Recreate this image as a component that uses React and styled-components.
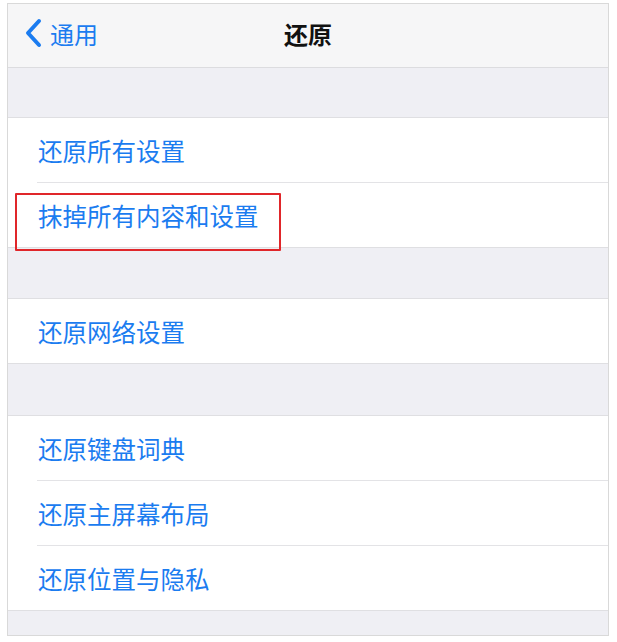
import React from 'react';
import styled, { createGlobalStyle } from 'styled-components';

const GlobalStyle = createGlobalStyle`
  body {
    margin: 0;
    background: #ffffff;
    font-family: "Noto Sans CJK SC", "Noto Sans", sans-serif;
  }
`;

const Frame = styled.div`
  margin: 3px 0 0 7px;
  width: 602px;
  height: 633px;
  box-sizing: border-box;
  border: 1px solid #d9d9d9;
  background: #efeff4;
  display: flex;
  flex-direction: column;
  overflow: hidden;
`;

const NavBar = styled.div`
  height: 64px;
  flex-shrink: 0;
  background: #f6f6f7;
  border-bottom: 1px solid #dcdcdf;
  position: relative;
  display: flex;
  align-items: center;
  justify-content: center;
  padding-bottom: 5px;
  box-sizing: border-box;
`;

const Back = styled.div`
  position: absolute;
  left: 16px;
  top: 0;
  bottom: 5px;
  display: flex;
  align-items: center;
  gap: 6px;
  color: #1b7cf0;
  font-size: 24px;
`;

const Title = styled.div`
  font-size: 24px;
  font-weight: 600;
  color: #111111;
`;

const Gap = styled.div`
  height: ${p => p.h}px;
  flex-shrink: 0;
`;

const Group = styled.div`
  background: #ffffff;
  border-top: 1px solid #dfdfe2;
  border-bottom: 1px solid #dfdfe2;
  flex-shrink: 0;
`;

const Row = styled.div`
  position: relative;
  display: flex;
  align-items: center;
  padding-top: 1px;
  box-sizing: border-box;
  font-size: 24.5px;
  color: #1b7cf0;
  border-top: ${p => (p.first ? 'none' : '1px solid #e3e3e6')};
  height: ${p => (p.first ? 64 : 65)}px;
  margin-left: ${p => (p.first ? 0 : 29)}px;
  padding-left: ${p => (p.first ? 30 : 1)}px;
`;

const Highlight = styled.div`
  position: absolute;
  left: -22px;
  top: 10px;
  width: 266px;
  height: 58px;
  box-sizing: border-box;
  border: 2px solid #e0262a;
  border-radius: 1px;
  pointer-events: none;
`;

const Chevron = () => (
  <svg width="20" height="30" viewBox="0 0 20 30">
    <path d="M15 3 L4 15 L15 27" fill="none" stroke="#1b7cf0" strokeWidth="4" strokeLinecap="round" strokeLinejoin="round" />
  </svg>
);

const groups = [
  ['还原所有设置', '抹掉所有内容和设置'],
  ['还原网络设置'],
  ['还原键盘词典', '还原主屏幕布局', '还原位置与隐私'],
];

const gaps = [49, 50, 51, 25];

export default function App() {
  return (
    <>
      <GlobalStyle />
      <Frame>
        <NavBar>
          <Back>
            <Chevron />
            <span>通用</span>
          </Back>
          <Title>还原</Title>
        </NavBar>
        {groups.map((items, gi) => (
          <React.Fragment key={gi}>
            <Gap h={gaps[gi]} />
            <Group>
              {items.map((label, i) => (
                <Row key={label} first={i === 0}>
                  {label}
                  {label === '抹掉所有内容和设置' && <Highlight />}
                </Row>
              ))}
            </Group>
          </React.Fragment>
        ))}
        <Gap h={gaps[3]} />
      </Frame>
    </>
  );
}
